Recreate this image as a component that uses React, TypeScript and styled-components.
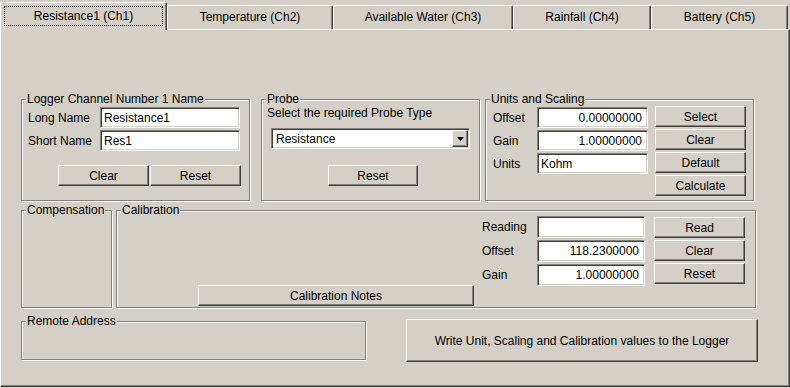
import React from "react";
import styled, { createGlobalStyle } from "styled-components";

const face = "#d4d0c8";
const shadow = "#808080";
const dark = "#404040";

const GlobalStyle = createGlobalStyle`
  html, body {
    margin: 0;
    padding: 0;
    background: ${face};
    overflow: hidden;
  }
  body {
    font-family: "Liberation Sans", Arial, sans-serif;
    font-size: 12px;
    color: #000;
  }
  * {
    box-sizing: border-box;
  }
`;

const Window = styled.div`
  width: 790px;
  height: 388px;
  padding-top: 2px;
  background: ${face};
`;

const TabStrip = styled.div`
  display: flex;
  align-items: flex-end;
  height: 27px;
`;

const Tab = styled.div<{ $width: number; $active?: boolean }>`
  position: relative;
  z-index: ${(p) => (p.$active ? 1 : 0)};
  width: ${(p) => p.$width}px;
  height: ${(p) => (p.$active ? 28 : 24)}px;
  margin-bottom: ${(p) => (p.$active ? -1 : 0)}px;
  padding: ${(p) => (p.$active ? "3px 3px 4px 3px" : "0 0 1px 0")};
  display: flex;
  align-items: center;
  justify-content: center;
  background: ${face};
  border-top: 1px solid #fff;
  border-left: 1px solid #fff;
  border-right: 1px solid ${dark};
  border-radius: 2px 2px 0 0;
  box-shadow: inset -1px 0 0 ${shadow};
  line-height: 14px;
  white-space: nowrap;
`;

const FocusLabel = styled.span`
  flex: 1;
  align-self: stretch;
  display: flex;
  align-items: center;
  justify-content: center;
  border: 1px dotted #000;
`;

const Panel = styled.div`
  width: 790px;
  height: 358px;
  border-top: 1px solid #fff;
  border-left: 1px solid #fff;
  border-right: 1px solid ${dark};
  border-bottom: 1px solid ${dark};
  box-shadow: inset -1px -1px 0 ${shadow};
  padding: 62px 0 0 20px;
  display: flex;
  flex-direction: column;
`;

const Row = styled.div<{ $top?: number }>`
  display: flex;
  align-items: flex-start;
  margin-top: ${(p) => p.$top ?? 0}px;
`;

const Group = styled.fieldset<{ $width: number; $height: number; $left?: number }>`
  margin: 0 0 0 ${(p) => p.$left ?? 0}px;
  padding: 0;
  min-width: 0;
  width: ${(p) => p.$width}px;
  height: ${(p) => p.$height}px;
  border: 1px solid ${shadow};
  box-shadow: inset 1px 1px 0 #fff, 1px 1px 0 #fff;
`;

const Legend = styled.legend`
  margin-left: 4px;
  padding: 0 1px;
  line-height: 14px;
  background: ${face};
`;

const Body = styled.div<{ $pad: string; $height?: number; $top?: number }>`
  padding: ${(p) => p.$pad};
  margin-top: ${(p) => p.$top ?? 0}px;
  height: ${(p) => (p.$height ? `${p.$height}px` : "auto")};
  display: flex;
`;

const Column = styled.div<{ $gap?: number; $top?: number; $left?: number }>`
  display: flex;
  flex-direction: column;
  align-items: flex-start;
  gap: ${(p) => p.$gap ?? 0}px;
  margin: ${(p) => p.$top ?? 0}px 0 0 ${(p) => p.$left ?? 0}px;
`;

const FormGrid = styled.div<{ $cols: string; $rowHeight: number; $top?: number }>`
  display: grid;
  grid-template-columns: ${(p) => p.$cols};
  grid-auto-rows: ${(p) => p.$rowHeight}px;
  row-gap: 2px;
  align-items: center;
  align-content: start;
  margin-top: ${(p) => p.$top ?? 0}px;
`;

const Label = styled.span`
  line-height: 14px;
  white-space: nowrap;
`;

const Field = styled.input<{ $right?: boolean }>`
  width: 100%;
  height: 100%;
  margin: 0;
  padding: 0 ${(p) => (p.$right ? "5px" : "3px")};
  font: inherit;
  color: #000;
  text-align: ${(p) => (p.$right ? "right" : "left")};
  background: #fff;
  border: 1px solid;
  border-color: ${shadow} #fff #fff ${shadow};
  box-shadow: inset 1px 1px 0 ${dark}, inset -1px -1px 0 ${face};
  outline: none;
`;

const Button = styled.button<{ $width: number; $height?: number }>`
  width: ${(p) => p.$width}px;
  height: ${(p) => p.$height ?? 21}px;
  margin: 0;
  padding: 0;
  font: inherit;
  color: #000;
  background: ${face};
  border: 1px solid;
  border-color: #fff ${dark} ${dark} #fff;
  box-shadow: inset -1px -1px 0 ${shadow};
  white-space: nowrap;
`;

const ButtonRow = styled.div<{ $top: number; $left?: number; $right?: number }>`
  display: flex;
  justify-content: ${(p) => (p.$right !== undefined ? "flex-end" : "flex-start")};
  gap: 1px;
  margin-top: ${(p) => p.$top}px;
  padding: 0 ${(p) => p.$right ?? 0}px 0 ${(p) => p.$left ?? 0}px;
`;

const Combo = styled.div`
  width: 199px;
  height: 21px;
  margin: 8px 0 0 4px;
  padding: 1px 1px 1px 4px;
  display: flex;
  align-items: center;
  background: #fff;
  border: 1px solid;
  border-color: ${shadow} #fff #fff ${shadow};
  box-shadow: inset 1px 1px 0 ${dark}, inset -1px -1px 0 ${face};
`;

const ComboText = styled.span`
  flex: 1;
  line-height: 14px;
`;

const DropButton = styled.span`
  width: 16px;
  height: 100%;
  display: flex;
  align-items: center;
  justify-content: center;
  background: ${face};
  border: 1px solid;
  border-color: #fff ${dark} ${dark} #fff;
  box-shadow: inset -1px -1px 0 ${shadow};
`;

const NotesArea = styled.div`
  flex: 1;
  display: flex;
  align-items: flex-end;
  justify-content: flex-end;
  padding-right: 8px;
`;

const WriteButton = styled(Button)`
  margin: 5px 0 0 40px;
`;

const tabs = [
  { label: "Resistance1 (Ch1)", width: 167 },
  { label: "Temperature (Ch2)", width: 166 },
  { label: "Available Water (Ch3)", width: 180 },
  { label: "Rainfall (Ch4)", width: 138 },
  { label: "Battery (Ch5)", width: 137 },
];

const App = () => {
  return (
    <Window>
      <GlobalStyle />
      <TabStrip>
        {tabs.map((t, i) => (
          <Tab key={t.label} $width={t.width} $active={i === 0}>
            {i === 0 ? <FocusLabel>{t.label}</FocusLabel> : t.label}
          </Tab>
        ))}
      </TabStrip>
      <Panel>
        <Row>
          <Group $width={229} $height={109}>
            <Legend>Logger Channel Number 1 Name</Legend>
            <Column $top={1} $left={6}>
              <FormGrid $cols="72px 140px" $rowHeight={21}>
                <Label>Long Name</Label>
                <Field defaultValue="Resistance1" readOnly />
                <Label>Short Name</Label>
                <Field defaultValue="Res1" readOnly />
              </FormGrid>
            </Column>
            <ButtonRow $top={14} $right={8}>
              <Button $width={91}>Clear</Button>
              <Button $width={91}>Reset</Button>
            </ButtonRow>
          </Group>

          <Group $width={219} $height={109} $left={11}>
            <Legend>Probe</Legend>
            <Column $left={5}>
              <Label>Select the required Probe Type</Label>
              <Combo>
                <ComboText>Resistance</ComboText>
                <DropButton>
                  <svg width="7" height="4" viewBox="0 0 7 4">
                    <polygon points="0,0 7,0 3.5,4" fill="#000" />
                  </svg>
                </DropButton>
              </Combo>
            </Column>
            <ButtonRow $top={16} $left={66}>
              <Button $width={90}>Reset</Button>
            </ButtonRow>
          </Group>

          <Group $width={269} $height={109} $left={5}>
            <Legend>Units and Scaling</Legend>
            <Body $pad="0 0 0 7px">
              <FormGrid $cols="44px 111px" $rowHeight={21} $top={1}>
                <Label>Offset</Label>
                <Field $right defaultValue="0.00000000" readOnly />
                <Label>Gain</Label>
                <Field $right defaultValue="1.00000000" readOnly />
                <Label>Units</Label>
                <Field defaultValue="Kohm" readOnly />
              </FormGrid>
              <Column $gap={2} $left={7}>
                <Button $width={91}>Select</Button>
                <Button $width={91}>Clear</Button>
                <Button $width={91}>Default</Button>
                <Button $width={91}>Calculate</Button>
              </Column>
            </Body>
          </Group>
        </Row>

        <Row $top={2}>
          <Group $width={91} $height={105}>
            <Legend>Compensation</Legend>
          </Group>
          <Group $width={640} $height={105} $left={4}>
            <Legend>Calibration</Legend>
            <Body $pad="0 10px 1px 0" $height={91} $top={-1}>
              <NotesArea>
                <Button $width={276}>Calibration Notes</Button>
              </NotesArea>
              <FormGrid $cols="55px 108px" $rowHeight={22}>
                <Label>Reading</Label>
                <Field $right readOnly />
                <Label>Offset</Label>
                <Field $right defaultValue="118.2300000" readOnly />
                <Label>Gain</Label>
                <Field $right defaultValue="1.00000000" readOnly />
              </FormGrid>
              <Column $gap={2} $top={1} $left={9}>
                <Button $width={91}>Read</Button>
                <Button $width={91}>Clear</Button>
                <Button $width={91}>Reset</Button>
              </Column>
            </Body>
          </Group>
        </Row>

        <Row $top={6}>
          <Group $width={345} $height={46}>
            <Legend>Remote Address</Legend>
          </Group>
          <WriteButton $width={352} $height={43}>
            Write Unit, Scaling and Calibration values to the Logger
          </WriteButton>
        </Row>
      </Panel>
    </Window>
  );
};

export default App;
